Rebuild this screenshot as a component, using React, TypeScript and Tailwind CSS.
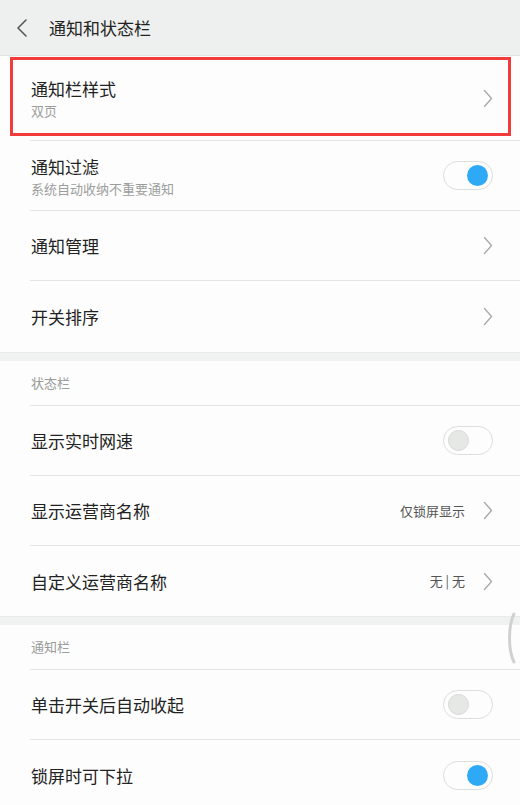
import React from "react";

const Chevron = () => (
    <svg width="10" height="19" viewBox="0 0 10 19" fill="none">
        <path d="M1.5 1.5 L8.5 9.5 L1.5 17.5" stroke="#a9aba9" strokeWidth="1.4" strokeLinecap="round" strokeLinejoin="round" />
    </svg>
);

const Toggle = ({ on }: { on: boolean }) => (
    <div className="w-[50px] h-[29px] rounded-full border border-[#dcdedc] bg-[#fdfdfd] flex items-center px-[4px] shrink-0">
        {on ? (
            <div className="ml-auto w-[21px] h-[21px] rounded-full bg-[#2ea9f6]" />
        ) : (
            <div className="w-[21px] h-[21px] rounded-full bg-[#e6e8e6] border border-[#d6d8d6]" />
        )}
    </div>
);

type RowProps = {
    title: string;
    sub?: string;
    value?: string;
    right: "chevron" | "on" | "off";
    h?: string;
    last?: boolean;
};

const Row = ({ title, sub, value, right, h = "h-[70px]", last }: RowProps) => (
    <div className="pl-[30px]">
        <div className={`${h} flex items-center pr-[27px] ${last ? "" : "border-b border-[#e4e6e4]"}`}>
            <div className="flex-1 flex flex-col pl-px">
                <div className="text-[17px] leading-[25px] text-[#222]">{title}</div>
                {sub && <div className="text-[13px] leading-[19px] text-[#9c9e9c]">{sub}</div>}
            </div>
            {value && <div className="text-[13px] text-[#555] mr-[18px]">{value}</div>}
            {right === "chevron" && <Chevron />}
            {right === "on" && <Toggle on />}
            {right === "off" && <Toggle on={false} />}
        </div>
    </div>
);

const SectionHeader = ({ label }: { label: string }) => (
    <div className="pl-[30px]">
        <div className="h-[45px] flex items-center border-b border-[#e4e6e4] pl-px text-[13px] text-[#9a9c9a]">{label}</div>
    </div>
);

const Band = () => <div className="h-[9px] bg-[#eff2f0] border-t border-[#e8ebe9]" />;

export default function App() {
    return (
        <div
            className="w-[520px] h-[805px] overflow-hidden bg-[#fdfdfd] relative"
            style={{ fontFamily: '"Noto Sans CJK SC", "Noto Sans", sans-serif' }}
        >
            {/* Header */}
            <div className="h-[56px] bg-[#eef0ef] flex items-center border-b border-[#e2e4e2]">
                <svg className="ml-[16px]" width="12" height="20" viewBox="0 0 12 20" fill="none">
                    <path d="M10 2 L2 10 L10 18" stroke="#555" strokeWidth="1.6" strokeLinecap="round" strokeLinejoin="round" />
                </svg>
                <div className="ml-[21px] text-[17px] text-[#222]">通知和状态栏</div>
            </div>

            {/* Section 1 */}
            <div className="relative">
                <Row title="通知栏样式" sub="双页" right="chevron" h="h-[85px]" />
                <div className="absolute left-[10px] top-[1px] w-[501px] h-[79px] border-[3px] border-[#f23b3b]" />
            </div>
            <Row title="通知过滤" sub="系统自动收纳不重要通知" right="on" />
            <Row title="通知管理" right="chevron" />
            <Row title="开关排序" right="chevron" h="h-[71px]" last />

            <Band />
            <SectionHeader label="状态栏" />
            <Row title="显示实时网速" right="off" />
            <Row title="显示运营商名称" value="仅锁屏显示" right="chevron" />
            <Row title="自定义运营商名称" value="无 | 无" right="chevron" last />

            <Band />
            <SectionHeader label="通知栏" />
            <Row title="单击开关后自动收起" right="off" />
            <Row title="锁屏时可下拉" right="on" last />

            {/* overscroll edge */}
            <svg className="absolute left-[505px] top-[612px]" width="12" height="52" viewBox="0 0 12 52" fill="none">
                <path d="M9 2 C3 14 3 38 9 50" stroke="#cfd2d0" strokeWidth="3" strokeLinecap="round" />
            </svg>
        </div>
    );
}
